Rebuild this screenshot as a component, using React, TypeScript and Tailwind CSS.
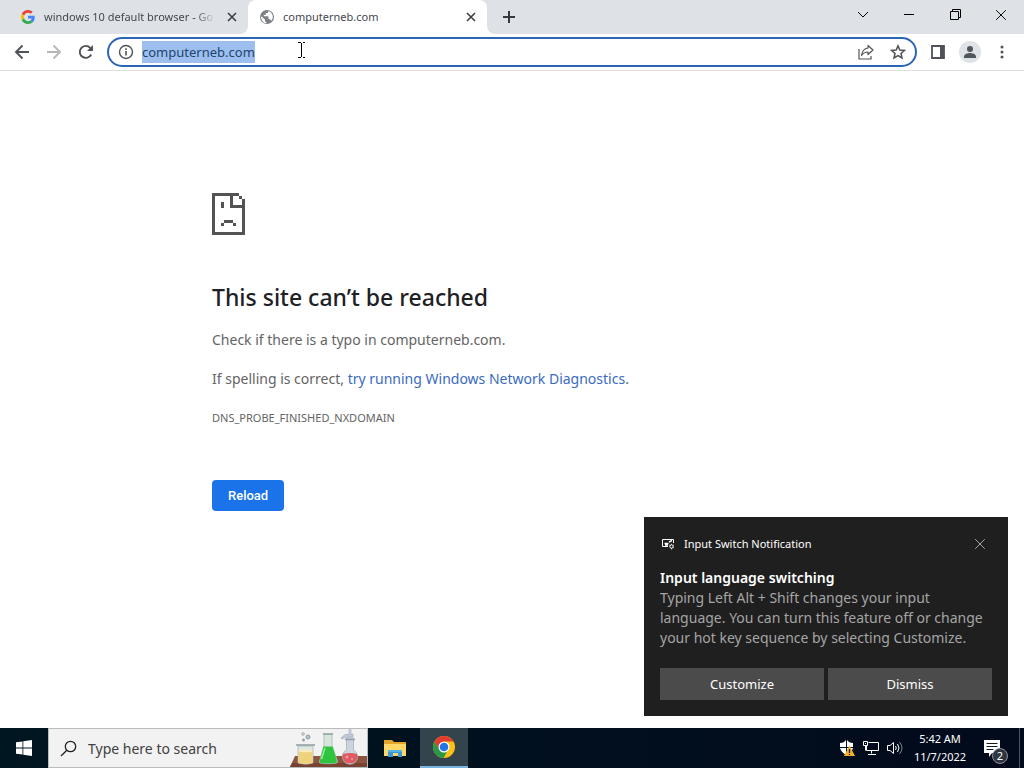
import { useEffect, useRef } from "react";

type IconProps = { className?: string };

function GoogleIcon() {
  return (
    <svg className="m-px size-[14px] shrink-0" viewBox="0 0 48 48" aria-hidden="true">
      <path fill="#ea4335" d="M24 9.5c3.54 0 6.71 1.22 9.21 3.6l6.85-6.85C35.9 2.38 30.47 0 24 0 14.62 0 6.51 5.38 2.56 13.22l7.98 6.19C12.43 13.72 17.74 9.5 24 9.5z" />
      <path fill="#4285f4" d="M46.98 24.55c0-1.57-.15-3.09-.38-4.55H24v9.02h12.94c-.58 2.96-2.26 5.48-4.78 7.18l7.73 6c4.51-4.18 7.09-10.36 7.09-17.65z" />
      <path fill="#fbbc05" d="M10.53 28.59c-.48-1.45-.76-2.99-.76-4.59s.27-3.14.76-4.59l-7.98-6.19C.92 16.46 0 20.12 0 24c0 3.88.92 7.54 2.56 10.78l7.97-6.19z" />
      <path fill="#34a853" d="M24 48c6.48 0 11.93-2.13 15.89-5.81l-7.73-6c-2.15 1.45-4.92 2.3-8.16 2.3-6.26 0-11.57-4.22-13.47-9.91l-7.98 6.19C6.51 42.62 14.62 48 24 48z" />
    </svg>
  );
}

function GlobeIcon() {
  return (
    <svg className="size-4 shrink-0" viewBox="0 0 16 16" aria-hidden="true">
      <circle cx="8" cy="8" r="7" fill="#7d8084" />
      <path fill="#fff" d="M2.4 7.2l3.7 3.6v1.1c0 .7.5 1.2 1.2 1.2v1.1A6 6 0 0 1 2.1 8.1zM9.4 2.1v.6c0 .8-.6 1.3-1.3 1.3H6.8v1.2c0 .4-.3.7-.7.7H4.8v1.3h4c.4 0 .7.3.7.7v2h.7c.6 0 1.100.4 1.200.9l1 .9A6 6 0 0 0 9.400 2.100z" />
    </svg>
  );
}

function CloseIcon({ className }: IconProps) {
  return (
    <svg className={className} viewBox="0 0 10 10" stroke="currentColor" fill="none" aria-hidden="true">
      <path d="M1 1l8 8M9 1l-8 8" />
    </svg>
  );
}

function SadPage() {
  return (
    <svg className="h-[42px] w-[33px]" viewBox="0 0 11 14" fill="#535353" shapeRendering="crispEdges" aria-hidden="true">
      <path d="M0 0h9v1h1v1h1v12H0zM1 1v12h9V5H6V1zM7 1v3h3V2H9V1zM3 3h1v2H3zM4 9h3v1H4zM3 10h1v1H3zM7 10h1v1H7z" fillRule="evenodd" />
    </svg>
  );
}

function LabArt() {
  return (
    <svg className="h-[38px] w-[78px] shrink-0" viewBox="0 0 78 38" aria-hidden="true">
      <path d="M6 27h72v11H1z" fill="#8d5540" />
      <path d="M3 34h75v4H1z" fill="#7a4331" />
      <path d="M9 17h15v17q-7 2.500-15 0z" fill="#dfe5e2" stroke="#a3b1b5" strokeWidth=".7" />
      <path d="M7 16h19" stroke="#8e9da3" strokeWidth="1.500" />
      <path d="M9.500 22h14v12q-7 2-14 0z" fill="#f0d27c" />
      <ellipse cx="16.500" cy="22" rx="7" ry="1.300" fill="#faecb8" />
      <circle cx="14" cy="5" r="1.300" fill="none" stroke="#8b969c" strokeWidth=".8" />
      <circle cx="19" cy="8" r="2" fill="#b7c3c7" stroke="#7f8d93" strokeWidth=".8" />
      <circle cx="14.500" cy="11" r="1.500" fill="#98a4a9" />
      <path d="M35 5h8v11l5.500 16q.5 2-2 2.300-7 1-14.500 0-2.300-.3-1.500-2.300L35 16z" fill="#d6e6dd" stroke="#9db4ab" strokeWidth=".7" />
      <path d="M34 5h10" stroke="#91a79e" strokeWidth="1.500" />
      <path d="M34.500 17.500h9L48 32q.4 1.700-2 2-7 .9-14 0-2-.3-1.200-2z" fill="#2fc43f" />
      <path d="M36 19l-3.500 11" stroke="#94ed9c" strokeWidth="1.500" />
      <path d="M57.500 9h7v12a7.600 7.600 0 1 1-7 0z" fill="#ccd4de" stroke="#9eabb9" strokeWidth=".7" />
      <path d="M52 9q3-4 8-4h4v3h-4q-4 0-7 2z" fill="#c3ccd6" stroke="#99a5b4" strokeWidth=".6" />
      <path d="M59.500 0h3v5h-3z" fill="#bfc9d5" />
      <path d="M56 10.500h10" stroke="#93a1b0" strokeWidth="1.500" />
      <path d="M54 25q7-2 14 0a7 7 0 0 1-3 8.500q-4 1.700-8 0A7 7 0 0 1 54 25z" fill="#df5a62" />
      <circle cx="58" cy="28" r="1.500" fill="#f49ca1" />
      <circle cx="63" cy="30" r="1" fill="#f49ca1" />
    </svg>
  );
}

function ChromeIcon() {
  return (
    <svg className="size-6" viewBox="0 0 24 24" aria-hidden="true">
      <circle cx="12" cy="12" r="11" fill="#fbc116" />
      <path d="M12 12L7.200 14.800 2.500 6.500A11 11 0 0 1 21.500 6.500H12z" fill="#e33b2e" />
      <path d="M2.500 6.500L7.500 15l4.500 2.500 3-.9L11.600 23A11 11 0 0 1 2.500 6.500z" fill="#279847" />
      <circle cx="12" cy="12" r="5.500" fill="#fff" />
      <circle cx="12" cy="12" r="4.300" fill="#2374e8" />
    </svg>
  );
}

function TabStrip() {
  return (
    <div className="flex h-[34px] items-stretch bg-[#dee1e6] text-[#45484d]">
      <div className="flex w-[248px] items-center gap-2 pr-2 pl-5 text-[11px]">
        <GoogleIcon />
        <span className="min-w-0 flex-1 mask-r-from-88% whitespace-nowrap">windows 10 default browser - Go</span>
        <button aria-label="Close tab" className="flex size-4 items-center justify-center text-[#3c4043]">
          <CloseIcon className="size-[10px] stroke-[1.6]" />
        </button>
      </div>
      <div className="relative flex w-[239px] items-center gap-2 rounded-t-lg bg-white pr-2 pl-[11px] text-[11px]">
        <svg className="absolute bottom-0 -left-2 size-2" viewBox="0 0 8 8" aria-hidden="true"><path d="M8 0v8H0a8 8 0 0 0 8-8z" fill="#fff" /></svg>
        <svg className="absolute -right-2 bottom-0 size-2" viewBox="0 0 8 8" aria-hidden="true"><path d="M0 0v8h8a8 8 0 0 1-8-8z" fill="#fff" /></svg>
        <GlobeIcon />
        <span className="flex-1">computerneb.com</span>
        <button aria-label="Close tab" className="flex size-4 items-center justify-center text-[#3c4043]">
          <CloseIcon className="size-[10px] stroke-[1.6]" />
        </button>
      </div>
      <button aria-label="New tab" className="flex w-11 items-center justify-center">
        <svg className="size-3" viewBox="0 0 12 12" stroke="#36393d" strokeWidth="2" aria-hidden="true"><path d="M6 0v12M0 6h12" /></svg>
      </button>
      <div className="flex flex-1 items-center justify-end pb-[5px] text-black">
        <button aria-label="Search tabs" className="flex w-[46px] justify-center">
          <svg className="h-[7px] w-3" viewBox="0 0 12 7" fill="none" stroke="currentColor" aria-hidden="true"><path d="M1 1l5 5 5-5" /></svg>
        </button>
        <button aria-label="Minimize" className="flex w-[46px] justify-center">
          <svg className="h-[11px] w-[10px]" viewBox="0 0 10 11" fill="none" stroke="currentColor" aria-hidden="true"><path d="M0 5.500h10" /></svg>
        </button>
        <button aria-label="Restore" className="flex w-[46px] justify-center">
          <svg className="size-[11px]" viewBox="0 0 11 11" fill="none" stroke="currentColor" aria-hidden="true"><path d="M.5 2.500h8v8h-8zM2.500 2.500v-2h8v8h-2" /></svg>
        </button>
        <button aria-label="Close" className="flex w-[46px] justify-center">
          <CloseIcon className="size-3 stroke-[0.8]" />
        </button>
      </div>
    </div>
  );
}

function AddressBar() {
  const address = useRef<HTMLInputElement>(null);
  useEffect(() => {
    address.current?.focus();
    address.current?.select();
  }, []);

  return (
    <div className="flex h-[37px] items-center border-b border-[#dcdee0] bg-white px-[6px] text-[#4f5357]">
      <button aria-label="Back" className="flex size-8 items-center justify-center">
        <svg className="size-4" viewBox="0 0 16 16" fill="none" stroke="currentColor" strokeWidth="1.900" aria-hidden="true"><path d="M15 8H2M8.500 1.500L2 8l6.500 6.500" /></svg>
      </button>
      <button aria-label="Forward" className="flex size-8 items-center justify-center text-[#b5b7b9]">
        <svg className="size-4" viewBox="0 0 16 16" fill="none" stroke="currentColor" strokeWidth="1.900" aria-hidden="true"><path d="M1 8h13M7.500 1.500L14 8l-6.500 6.500" /></svg>
      </button>
      <button aria-label="Reload page" className="flex size-8 items-center justify-center">
        <svg className="size-4" viewBox="0 0 16 16" fill="none" aria-hidden="true">
          <path d="M13.200 10.500A6 6 0 1 1 12.200 3.800L14 5.600" stroke="currentColor" strokeWidth="1.900" />
          <path d="M15 1v6H9z" fill="currentColor" />
        </svg>
      </button>
      <div className="ml-[5px] flex h-[30px] flex-1 items-center rounded-full border-2 border-[#2a66b5] bg-white pr-px pl-[9px]">
        <button aria-label="View site information" className="flex size-4 items-center justify-center">
          <svg className="size-4" viewBox="0 0 16 16" fill="none" stroke="currentColor" aria-hidden="true"><circle cx="8" cy="8" r="6.500" strokeWidth="1.400" /><path d="M8 7v4.500M8 4.300V6" strokeWidth="1.600" /></svg>
        </button>
        <input ref={address} type="text" aria-label="Address" defaultValue="computerneb.com" spellCheck={false} className="ml-2 h-[22px] min-w-0 flex-1 bg-transparent text-[13px]/[22px] text-[#22436d] outline-none selection:bg-[#9dbff0] selection:text-[#22436d]" />
        <button aria-label="Share" className="flex size-8 items-center justify-center">
          <svg className="size-4" viewBox="0 0 16 16" fill="none" stroke="currentColor" strokeWidth="1.200" strokeLinejoin="round" aria-hidden="true"><path d="M1 5v10h12v-3M10 1.500L15 6l-5 4.500V8C7 8 5.200 9 3.500 11.500 4 7.500 6.200 4.500 10 4z" /></svg>
        </button>
        <button aria-label="Bookmark this page" className="flex size-8 items-center justify-center">
          <svg className="size-4" viewBox="0 0 16 16" fill="none" stroke="currentColor" strokeWidth="1.500" aria-hidden="true"><path d="M8 1.900l1.800 4.100 4.600.4L11 9.500l1 4.500L8 11.600 4 14l1-4.500L1.600 6.400 6.200 6z" /></svg>
        </button>
      </div>
      <button aria-label="Side panel" className="ml-[5px] flex size-8 items-center justify-center">
        <svg className="size-[14px]" viewBox="0 0 14 14" fill="none" aria-hidden="true"><path d="M1 1h12v12H1z" stroke="currentColor" strokeWidth="1.800" /><path d="M9 1h4v12H9z" fill="currentColor" /></svg>
      </button>
      <button aria-label="Profile" className="flex size-8 items-center justify-center">
        <svg className="size-[22px]" viewBox="0 0 22 22" aria-hidden="true"><circle cx="11" cy="11" r="11" fill="#dfe2e6" /><circle cx="11" cy="8" r="3" fill="#50565d" /><path d="M5 17v-1.500c0-2.400 4-3.500 6-3.500s6 1.100 6 3.500V17z" fill="#50565d" /></svg>
      </button>
      <button aria-label="Menu" className="flex size-8 items-center justify-center">
        <svg className="h-[14px] w-1" viewBox="0 0 4 14" fill="currentColor" aria-hidden="true"><circle cx="2" cy="2" r="1.500" /><circle cx="2" cy="7" r="1.500" /><circle cx="2" cy="12" r="1.500" /></svg>
      </button>
    </div>
  );
}

function ErrorPage() {
  return (
    <main className="mx-auto w-full max-w-[600px] flex-1 pt-[122px] text-[#646464]">
      <SadPage />
      <h1 className="mt-[46px] text-[23px]/8 font-medium text-[#202124]">This site can’t be reached</h1>
      <p className="mt-[15px] text-sm/6">Check if there is a typo in computerneb.com.</p>
      <p className="mt-[15px] text-sm/6">
        If spelling is correct, <a href="#diagnostics" className="text-[#3b6bc0]">try running Windows Network Diagnostics</a>.
      </p>
      <p className="mt-[15px] text-[11px]/6">DNS_PROBE_FINISHED_NXDOMAIN</p>
      <button className="mt-[50px] h-[31px] rounded bg-[#1a73e8] px-4 font-['Roboto',sans-serif] text-[13px] font-medium text-white">Reload</button>
    </main>
  );
}

function Toast() {
  return (
    <aside className="absolute right-4 bottom-[52px] w-[364px] bg-[#1f1f1f] p-4 text-white">
      <header className="flex h-[22px] items-center">
        <svg className="mr-2 size-4" viewBox="0 0 16 16" fill="none" stroke="currentColor" aria-hidden="true">
          <path d="M8 10.500H2.500v-7h11V7" />
          <path d="M4.500 7.500h4M5 9h3M9 6l3-1.500" strokeWidth="1.400" />
          <circle cx="11.500" cy="10.500" r="1.700" />
          <path d="M9.200 9l1 .7M13.800 12l-1-.7M11.500 7.800v1M11.500 12.200v1.200M13.800 9l-1 .7" strokeWidth=".8" />
        </svg>
        <span className="flex-1 text-[11px]">Input Switch Notification</span>
        <button aria-label="Close notification" className="mr-[6px] text-[#aaa]"><CloseIcon className="size-3 stroke-[0.8]" /></button>
      </header>
      <h2 className="mt-[13px] text-sm/5 font-semibold">Input language switching</h2>
      <p className="text-sm/5 text-[#a5a5a5]">Typing Left Alt + Shift changes your input language. You can turn this feature off or change your hot key sequence by selecting Customize.</p>
      <div className="mt-5 grid grid-cols-2 gap-1 text-[13px]">
        <button className="h-8 bg-[#4b4b4b] pt-px">Customize</button>
        <button className="h-8 bg-[#4b4b4b] pt-px">Dismiss</button>
      </div>
    </aside>
  );
}

function Taskbar() {
  return (
    <footer className="flex h-10 items-stretch bg-[#00111c] bg-linear-to-r from-[#001620] to-[#020a1c] text-white">
      <button aria-label="Start" className="flex w-12 items-center justify-center">
        <svg className="size-4" viewBox="0 0 16 16" fill="#fff" aria-hidden="true"><path d="M0 2.300l6.500-.9v6.200H0zM7.300 1.300L16 0v7.600H7.300zM0 8.400h6.500v6.200L0 13.700zM7.300 8.400H16V16l-8.700-1.300z" /></svg>
      </button>
      <label className="flex w-80 items-center border border-[#b8babb] bg-[#f2f2f2] pl-[11px]">
        <svg className="size-[17px] shrink-0" viewBox="0 0 17 17" fill="none" stroke="#222" strokeWidth="1.300" aria-hidden="true"><circle cx="10.500" cy="6.500" r="5.200" /><path d="M6.800 10.200L1 16" /></svg>
        <input type="text" aria-label="Search" placeholder="Type here to search" className="ml-[11px] min-w-0 flex-1 bg-transparent pt-px text-sm outline-none placeholder:text-[#414141]" />
        <LabArt />
      </label>
      <button aria-label="File Explorer" className="mr-px ml-[3px] flex w-12 items-center justify-center">
        <svg className="h-[19px] w-[22px]" viewBox="0 0 22 19" aria-hidden="true">
          <path d="M0 1h8l2 2h12v14H0z" fill="#e5a52d" /><path d="M0 5h22v12H0z" fill="#ffd768" />
          <path d="M4 11h14v7h-4v-4H9v4H4z" fill="#3797d8" /><path d="M4 11h14v2H4z" fill="#55b2e8" />
        </svg>
      </button>
      <button aria-label="Google Chrome" className="flex w-12 items-center justify-center border-b-2 border-[#79b2df] bg-[#33444d]">
        <ChromeIcon />
      </button>
      <div className="ml-auto flex items-center">
        <button aria-label="Windows Security" className="flex w-6 justify-center">
          <svg className="size-4" viewBox="0 0 16 16" aria-hidden="true">
            <path d="M7 0v7H1V3q4 0 6-3zM8 0q2 3 6 3v4H8zM1 8h6v7Q2 12 1 8zM8 8h6q-1 4-6 7z" fill="#fff" />
            <path d="M10.500 5.500L16 16H5z" fill="#f4af2e" /><path d="M10.500 9v4M10.500 14v1" stroke="#302100" strokeWidth="1.300" />
          </svg>
        </button>
        <button aria-label="Network" className="flex w-6 justify-center">
          <svg className="size-4" viewBox="0 0 16 16" fill="none" stroke="#fff" aria-hidden="true"><path d="M5.500 2.500h10v8h-12V6M8.500 10.500v3M5 14.500h8M.5 1.500h4v4h-4zM2.500 5.500v5M2 3.500h1" /></svg>
        </button>
        <button aria-label="Volume" className="flex w-6 justify-center">
          <svg className="size-4" viewBox="0 0 16 16" fill="none" stroke="#fff" aria-hidden="true"><path d="M.5 5.500H3l3.500-3v11l-3.500-3H.5zM8.500 6q1.500 2 0 4M10.500 4q3 4 0 8" /><path d="M12.500 2q5 6 0 12" stroke="#7a838e" /></svg>
        </button>
        <div className="w-[66px] text-center text-[11px]/[18px]">5:42 AM<br />11/7/2022</div>
        <button aria-label="2 new notifications" className="flex w-[46px] justify-center pt-2">
          <svg className="size-6" viewBox="0 0 24 24" aria-hidden="true">
            <path d="M0 0h16v13H8l-3 4v-4H0z" fill="#fff" /><path d="M2.500 3.500h11M2.500 6.500h11M2.500 9.500h7" stroke="#101824" />
            <circle cx="16" cy="16" r="7.500" fill="#303640" stroke="#8d929a" /><text x="16" y="20" textAnchor="middle" fontSize="11" fill="#fff">2</text>
          </svg>
        </button>
        <div className="mr-1 h-10 w-px bg-[#4b535e]" />
      </div>
    </footer>
  );
}

export default function App() {
  return (
    <div className="relative flex min-h-screen flex-col bg-white font-['Noto_Sans',sans-serif]">
      <TabStrip />
      <AddressBar />
      <ErrorPage />
      <Toast />
      <Taskbar />
      <svg className="pointer-events-none absolute top-[42px] left-[297px] h-4 w-[9px]" viewBox="0 0 9 16" fill="none" stroke="#000" shapeRendering="crispEdges" aria-hidden="true"><path d="M1 .5h2.500M5.500.5H8M4.500 1v14M1 15.500h2.500M5.500 15.500H8" /></svg>
    </div>
  );
}
